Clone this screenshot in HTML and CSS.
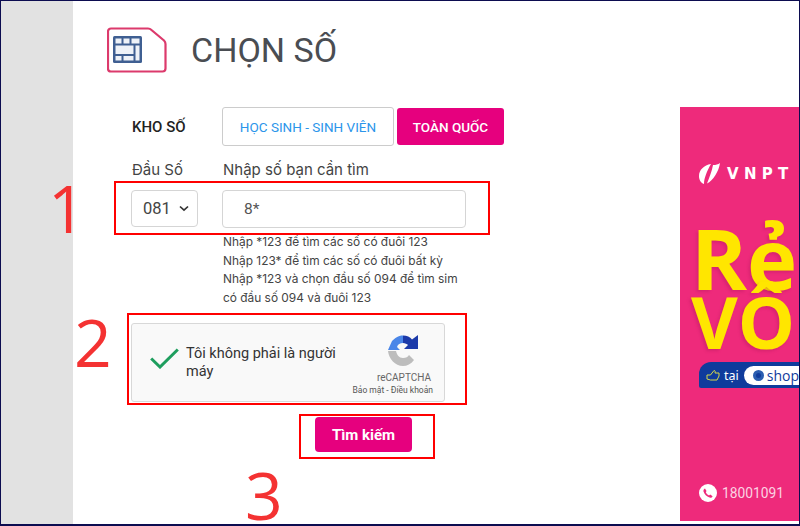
FILE: index.html
```html
<!DOCTYPE html>
<html lang="vi">
<head>
<meta charset="utf-8">
<title>Chọn số</title>
<link rel="stylesheet" href="styles.css">
</head>
<body>
<div class="frame">
  <aside class="rail"></aside>
  <main class="content">
    <header class="head">
      <svg class="sim" width="60" height="46" viewBox="0 0 60 46">
        <path d="M4 1.500H41Q43 1.500 44.500 3L57 13.500Q58.500 15 58.500 17V41.500A3 3 0 0 1 55.500 44.500H4A3 3 0 0 1 1 41.500V4.500A3 3 0 0 1 4 1.500Z" fill="#fff" stroke="#dc3a6c" stroke-width="2.200"/>
        <rect x="6" y="9" width="29" height="27" rx="1.500" fill="#3f5f92"/>
        <g fill="#eef2f8">
          <rect x="8.500" y="11.500" width="6" height="5"/><rect x="16.500" y="11.500" width="6" height="5"/><rect x="24.500" y="11.500" width="8" height="5"/>
          <rect x="8.500" y="18.500" width="18" height="8.500"/><rect x="8.500" y="29" width="6" height="4.500"/><rect x="16.500" y="29" width="10" height="4.500"/>
          <rect x="28.500" y="18.500" width="4" height="15"/>
        </g>
      </svg>
      <h1 class="title">CHỌN SỐ</h1>
    </header>
    <div class="kho">
      <strong class="kho-label">KHO SỐ</strong>
      <button class="tab tab-outline">HỌC SINH - SINH VIÊN</button>
      <button class="tab tab-solid">TOÀN QUỐC</button>
    </div>
    <div class="fields">
      <div class="col-prefix">
        <label class="lbl">Đầu Số</label>
        <div class="select">081<svg width="10" height="7" viewBox="0 0 10 7"><path d="M1 1.500L5 5.200L9 1.500" fill="none" stroke="#333" stroke-width="1.700"/></svg></div>
      </div>
      <div class="col-number">
        <label class="lbl">Nhập số bạn cần tìm</label>
        <div class="input">8*</div>
        <p class="help">Nhập *123 để tìm các số có đuôi 123<br>Nhập 123* để tìm các số có đuôi bất kỳ<br>Nhập *123 và chọn đầu số 094 để tìm sim<br>có đầu số 094 và đuôi 123</p>
      </div>
    </div>
    <div class="captcha">
      <svg class="check" width="29" height="21" viewBox="0 0 29 21"><path d="M1.200 10.500L10 19L27.800 1.500" fill="none" stroke="#1e9e5e" stroke-width="3"/></svg>
      <span class="captcha-text">Tôi không phải là người máy</span>
      <div class="brand">
        <svg class="brand-logo" width="32" height="31" viewBox="0 0 32 31">
          <path d="M16 .5C11 .5 8 3 5 6L1 15H13L10 12C11 9 13 8 16 8Z" fill="#4a86e8"/>
          <path d="M16 .5C20 .5 23 2 25 4.500L31 0V14H17L21 10C20 9 18 8 16 8Z" fill="#1c3aa9"/>
          <path d="M1 16H9C10 20 12 23 16 23C19 23 21 22 22 20L27 25C24 29 20 31 16 31C8 31 2 24 1 16Z" fill="#bdbdbd"/>
        </svg>
        <span class="brand-name">reCAPTCHA</span>
        <span class="brand-links">Bảo mật - Điều khoản</span>
      </div>
    </div>
    <button class="search">Tìm kiếm</button>
  </main>
  <aside class="ad">
    <div class="ad-logo">
      <svg width="23" height="23" viewBox="0 0 23 23"><path d="M13 2C6 3 1 8 1 14C1 18 3 21 6 22C6 16 9 9 13 2ZM15 3C14 9 11 16 9 21.500C15 19 21 9 22 1C20 2.500 18 3 15 3Z" fill="#fff"/></svg>
      <span>VNPT</span>
    </div>
    <div class="ad-head">
      <div class="ad-big">Rẻ</div>
      <div class="ad-big ad-big2">VÔ</div>
    </div>
    <div class="ad-pill">
      <svg width="14" height="12" viewBox="0 0 14 12"><path d="M1 6H4.500L8 1.500C9 1.500 9.500 2.500 9 4H13V7L11 11H4.500L1 10Z" fill="none" stroke="#d6d94a" stroke-width="1"/></svg>
      <span class="ad-tai">tại</span>
      <span class="ad-shop"><i class="ad-dot"></i>shopee</span>
    </div>
    <div class="ad-phone">
      <svg width="18" height="18" viewBox="0 0 18 18"><circle cx="9" cy="9" r="9" fill="#fff"/><path d="M6 4.500L7.500 7L6.800 8.200C7.500 9.700 8.500 10.700 10 11.400L11.200 10.600L13.600 12.200C13 13.600 11.600 14 10.500 13.600C7.500 12.500 5.500 10.500 4.500 7.600C4.200 6.300 4.800 5 6 4.500Z" fill="#ee2a7b"/></svg>
      <span>18001091</span>
    </div>
  </aside>
  <div class="mark mark-1"></div>
  <div class="mark mark-2"></div>
  <div class="mark mark-3"></div>
  <span class="num num-1">1</span>
  <span class="num num-2">2</span>
  <span class="num num-3">3</span>
</div>
</body>
</html>
```
FILE: styles.css
```css
* { box-sizing: border-box; }
html, body { margin: 0; padding: 0; }
body { width: 800px; height: 526px; overflow: hidden; background: #fff; }

.frame {
  position: relative;
  display: flex;
  width: 800px;
  height: 526px;
  border: 1px solid #0c0c50;
  border-width: 1px 1px 2px 1px;
  overflow: hidden;
  font-family: Inter, sans-serif;
  color: #333;
}

.rail { width: 72px; flex: none; background: #e2e2e2; }

.content { width: 607px; flex: none; padding: 26px 0 0 33px; position: relative; }

.head { display: flex; align-items: center; gap: 24px; height: 46px; margin-left: 1px; }
.sim { flex: none; }
.title { margin: 0; font: 400 34px/46px Roboto, sans-serif; color: #4a4d52; }

.kho { display: flex; align-items: center; margin: 34px 0 0 26px; height: 39px; }
.kho-label { width: 90px; font: 500 15px Roboto, sans-serif; color: #222; }
.tab { height: 39px; font: 400 13.500px Roboto, sans-serif; border-radius: 3px; padding: 0; }
.tab-outline { width: 172px; background: #fff; color: #2b95ea; border: 1px solid #ccc; }
.tab-solid { width: 107px; height: 37px; margin-left: 3px; background: #e6007e; color: #fff; border: 0; font-weight: 500; }

.fields { display: flex; margin: 13px 0 0 25px; }
.col-prefix { width: 91px; }
.lbl { display: block; font-size: 15px; line-height: 22px; color: #444; margin-left: 1px; }
.select {
  display: flex; align-items: center; justify-content: space-between;
  width: 67px; height: 37px; margin-top: 9px; padding: 0 8px 0 11px;
  border: 1px solid #d5d5d5; border-radius: 4px;
  font: 400 16.500px Roboto, sans-serif; color: #444;
}
.col-number { width: 244px; }
.input {
  height: 38px; margin-top: 9px; padding: 0 0 0 21px;
  border: 1px solid #d5d5d5; border-radius: 4px;
  font: 400 15.500px/36px Roboto, sans-serif; color: #555;
}
.help { margin: 5px 0 0 1px; font-size: 11.900px; line-height: 18.500px; color: #444; width: 250px; }

.captcha {
  display: flex; align-items: flex-start;
  width: 314px; height: 79px; margin: 16px 0 0 25px;
  background: #f9f9f9; border: 1px solid #d8d8d8; border-radius: 3px;
}
.check { flex: none; margin: 24px 0 0 18px; }
.captcha-text { width: 165px; flex: none; margin: 21px 0 0 7px; font: 400 14.500px/18px Roboto, sans-serif; color: #333; }
.brand { display: flex; flex-direction: column; align-items: flex-end; flex: 1; min-width: 0; padding: 11px 11px 0 0; }
.brand-logo { margin-right: 14px; }
.brand-name { font: 400 10px/12px Roboto, sans-serif; color: #666; margin: 6px 2px 0 0; }
.brand-links { font: 400 8.500px/12px Roboto, sans-serif; color: #555; margin-top: 0; white-space: nowrap; }

.search {
  display: block; width: 97px; height: 35px; margin: 15px 0 0 209px;
  background: #e6007e; color: #fff; border: 0; border-radius: 4px;
  font: 700 15px Roboto, sans-serif;
}

.ad { position: relative; width: 120px; height: 414px; margin-top: 106px; flex: none; background: #ee2a7b; overflow: hidden; }
.ad-logo { display: flex; align-items: center; gap: 6px; height: 23px; margin: 55px 0 0 18px; color: #fff; font: 700 15px "DejaVu Sans", sans-serif; letter-spacing: 5.300px; white-space: nowrap; }
.ad-head { margin: 30px 0 0 11px; }
.ad-big { font: 700 85px/84px "Open Sans", sans-serif; color: #ffe600; white-space: nowrap; text-shadow: -2px 2px 3px rgba(150, 20, 80, .25); }
.ad-big2 { font-size: 72px; line-height: 62px; margin-top: -9px; }
.ad-pill { position: absolute; left: 19px; top: 255px; width: 130px; height: 26px; border-radius: 12px 0 0 2px; background: #0f3b9c; display: flex; align-items: center; padding-left: 7px; gap: 4px; white-space: nowrap; }
.ad-tai { color: #fff; font: 400 12.500px "Noto Sans", sans-serif; }
.ad-shop { display: flex; align-items: center; gap: 3px; background: #fff; border-radius: 10px; padding: 0 0 0 9px; height: 19px; margin-left: 1px; color: #0f3b9c; font: 500 14px "Open Sans", sans-serif; }
.ad-dot { width: 11px; height: 11px; border-radius: 50%; background: #0f3b9c; border: 3px solid #2a5db0; flex: none; }
.ad-phone { position: absolute; left: 19px; top: 377px; display: flex; align-items: center; gap: 5px; color: #fbd3e3; font: 400 13.800px Roboto, sans-serif; }

.mark { position: absolute; border: 2px solid #f00; pointer-events: none; }
.mark-1 { left: 113px; top: 180px; width: 376px; height: 54px; }
.mark-2 { left: 126px; top: 312px; width: 340px; height: 92px; }
.mark-3 { left: 298px; top: 413px; width: 136px; height: 45px; }

.num { position: absolute; font: 500 66px/56px "Open Sans", sans-serif; color: #f43232; }
.num-1 { left: 47px; top: 178px; }
.num-2 { left: 73px; top: 312px; }
.num-3 { left: 244px; top: 465px; }
```
